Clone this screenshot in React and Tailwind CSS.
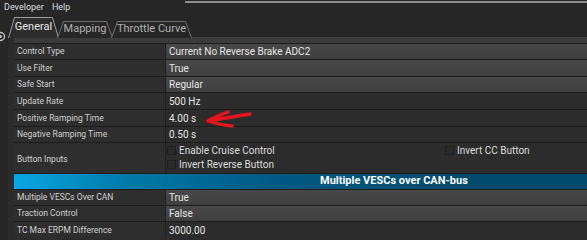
import React from 'react';

const rows = [
  { label: 'Control Type', value: 'Current No Reverse Brake ADC2', kind: 'combo', h: 'h-[16px]' },
  { label: 'Use Filter', value: 'True', kind: 'combo', h: 'h-[17px]' },
  { label: 'Safe Start', value: 'Regular', kind: 'combo', h: 'h-[16px]' },
  { label: 'Update Rate', value: '500 Hz', kind: 'spin', h: 'h-[17px]' },
  { label: 'Positive Ramping Time', value: '4.00 s', kind: 'spin', h: 'h-[17px]' },
  { label: 'Negative Ramping Time', value: '0.50 s', kind: 'spin', h: 'h-[16px]' },
];

const rows2 = [
  { label: 'Multiple VESCs Over CAN', value: 'True', kind: 'combo', h: 'h-[16px]' },
  { label: 'Traction Control', value: 'False', kind: 'combo', h: 'h-[16px]' },
  { label: 'TC Max ERPM Difference', value: '3000.00', kind: 'spin', h: 'h-[17px]' },
];

const Row = ({ label, value, kind, h }) => (
  <div className={`flex ${h} border-t border-[#1c1c1c]`}>
    <div className="w-[151px] shrink-0 flex items-center pl-[3px] bg-[#2e2e2e] text-[8.5px] text-[#d0d0d0]">
      {label}
    </div>
    <div
      className={`flex-1 flex items-center pl-[3px] border-l border-[#1f1f1f] text-[10px] text-[#e6e6e6] ${
        kind === 'combo' ? 'bg-gradient-to-b from-[#484848] to-[#3f3f3f]' : 'bg-[#2c2c2c]'
      }`}
    >
      {value}
    </div>
  </div>
);

const Check = ({ text }) => (
  <div className="flex items-center gap-[3px] h-[13px]">
    <span className="w-[9px] h-[9px] border border-[#1f1f1f] bg-[#2a2a2a]" />
    <span className="text-[10px] text-[#dcdcdc]">{text}</span>
  </div>
);

const Tab = ({ text, active, w, ml }) => {
  const h = active ? 21 : 17;
  return (
    <div className={`relative ${ml} flex items-center justify-center`} style={{ width: w, height: h }}>
      <svg className="absolute inset-0" width={w} height={h} viewBox={`0 0 ${w} ${h}`}>
        <path
          d={`M0.5 ${h} L6.5 0.5 L${w - 6.5} 0.5 L${w - 0.5} ${h}`}
          fill={active ? '#2d2d2d' : '#262626'}
          stroke={active ? '#9a9a9a' : '#707070'}
          strokeWidth="1"
        />
      </svg>
      <span className={`relative text-[11px] ${active ? 'text-[#e8e8e8]' : 'text-[#b0b0b0]'}`}>{text}</span>
    </div>
  );
};

export default function App() {
  return (
    <div className="relative w-[587px] h-[240px] overflow-hidden bg-[#262626] flex flex-col" style={{ fontFamily: 'Roboto, "Liberation Sans", sans-serif' }}>
      {/* menu bar */}
      <div className="h-[16px] flex items-center shrink-0">
        <div className="flex gap-[8px] pl-[4px] text-[9px] text-[#dedede] w-[185px] shrink-0">
          <span>Developer</span>
          <span>Help</span>
        </div>
        <div className="flex-1 self-start h-[2px] mt-[1px] bg-[#8e8e8e]" />
      </div>

      <div className="flex flex-1 min-h-0">
        {/* left strip */}
        <div className="w-[8px] shrink-0 relative bg-[#262626]">
          <svg className="absolute left-[-5px] top-[15px]" width="11" height="11" viewBox="0 0 11 11">
            <circle cx="5.5" cy="5.5" r="4" fill="none" stroke="#bdbdbd" strokeWidth="1.4" />
            <circle cx="5.5" cy="5.5" r="1.5" fill="#bdbdbd" />
          </svg>
        </div>

        <div className="flex-1 flex flex-col min-w-0">
          {/* tabs */}
          <div className="h-[22px] flex items-end shrink-0 relative z-10">
            <Tab text="General" active w={51} ml="" />
            <Tab text="Mapping" w={56} ml="-ml-[2px]" />
            <Tab text="Throttle Curve" w={81} ml="-ml-[2px]" />
          </div>

          {/* pane */}
          <div className="flex-1 bg-[#2b2b2b] border-t border-[#3e3e3e] -mt-[1px] pl-[6px] flex flex-col min-h-0">
            <div className="h-[5px] bg-[#3b3b3b] shrink-0" />
            {rows.map((r) => (
              <Row key={r.label} {...r} />
            ))}
            <div className="flex h-[31px] border-t border-[#1c1c1c]">
              <div className="w-[151px] shrink-0 flex items-center pt-[2px] pl-[3px] bg-[#2e2e2e] text-[8.5px] text-[#d0d0d0]">
                Button Inputs
              </div>
              <div className="flex-1 border-l border-[#1f1f1f] bg-[#2c2c2c] pl-[1px] pt-[1px] flex flex-col gap-[1px]">
                <div className="flex">
                  <div className="w-[278px]">
                    <Check text="Enable Cruise Control" />
                  </div>
                  <Check text="Invert CC Button" />
                </div>
                <Check text="Invert Reverse Button" />
              </div>
            </div>
            <div className="h-[16px] border-t border-[#1c1c1c] flex items-center pl-[306px] text-[11px] font-bold text-white bg-[linear-gradient(to_right,#0aa7e3_0%,#0079a8_20%,#005a85_45%,#004b6d_75%)]">
              Multiple VESCs over CAN-bus
            </div>
            {rows2.map((r) => (
              <Row key={r.label} {...r} />
            ))}
          </div>
        </div>
      </div>

      {/* red annotation arrow */}
      <svg className="absolute left-[200px] top-[106px]" width="56" height="28" viewBox="0 0 56 28">
        <path
          d="M8 15 C 20 13, 38 10, 50 8 M28 6 C 20 9, 13 12, 8 15 C 14 17, 22 19, 32 20"
          fill="none"
          stroke="#e8141c"
          strokeWidth="3.4"
          strokeLinecap="round"
          strokeLinejoin="round"
        />
      </svg>
    </div>
  );
}
